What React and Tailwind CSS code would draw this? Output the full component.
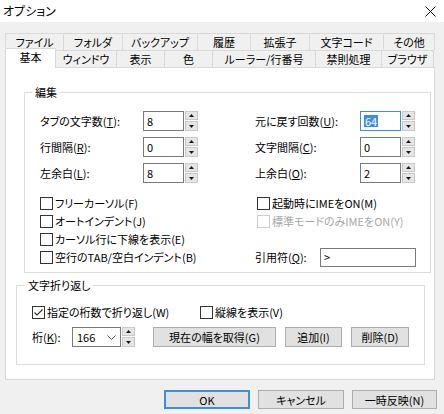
import React from 'react';

const row1 = [
  ['ファイル', 'w-[58px]'],
  ['フォルダ', 'w-[59px]'],
  ['バックアップ', 'w-[75px]'],
  ['履歴', 'w-[53px]'],
  ['拡張子', 'w-[59px]'],
  ['文字コード', 'w-[74px]'],
  ['その他', 'w-[52px]'],
];

const row2 = [
  ['ウィンドウ', 'w-[61px]'],
  ['表示', 'w-[48px]'],
  ['色', 'w-[48px]'],
  ['ルーラー/行番号', 'w-[103px]'],
  ['禁則処理', 'w-[66px]'],
  ['ブラウザ', 'w-[52px]'],
];

const U = ({ children }) => <span className="underline underline-offset-[1px]">{children}</span>;

function Spin() {
  return (
    <div className="ml-[1px] flex h-[20px] w-[13px] flex-col gap-[1px]">
      <div className="flex h-[9px] items-center justify-center border border-[#c8c8c8] bg-[#e5e5e5]">
        <svg width="5" height="3" viewBox="0 0 5 3"><path d="M0 3h5L2.5 0z" fill="#1a1a1a" /></svg>
      </div>
      <div className="flex h-[10px] items-center justify-center border border-[#c8c8c8] bg-[#e5e5e5]">
        <svg width="5" height="3" viewBox="0 0 5 3"><path d="M0 0h5L2.5 3z" fill="#1a1a1a" /></svg>
      </div>
    </div>
  );
}

function NumRow({ label, acc, value, labelW, selected }) {
  return (
    <div className="flex h-[20px] items-center">
      <span className={labelW}>
        {label}(<U>{acc}</U>):
      </span>
      <div
        className={
          'flex h-[20px] w-[41px] items-center bg-white pl-[3px] border ' +
          (selected ? 'border-[#3d8fdb]' : 'border-[#7a7a7a]')
        }
      >
        {selected ? <span className="bg-[#3d8fdb] px-[1px] text-white">{value}</span> : value}
      </div>
      <Spin />
    </div>
  );
}

function Check({ checked, disabled, children }) {
  return (
    <div className={'flex h-[18px] items-center gap-[2px] ' + (disabled ? 'text-[#a6a6a6]' : '')}>
      <span
        className={
          'flex h-[13px] w-[13px] shrink-0 items-center justify-center border bg-white ' +
          (disabled ? 'border-[#cccccc]' : 'border-[#333333]')
        }
      >
        {checked && (
          <svg width="11" height="11" viewBox="0 0 11 11">
            <path d="M1.5 5.5L4 8L9.5 2.5" fill="none" stroke="#333" strokeWidth="1.1" />
          </svg>
        )}
      </span>
      <span className="whitespace-nowrap">{children}</span>
    </div>
  );
}

function Btn({ w, children, primary }) {
  return (
    <div
      className={
        'flex items-center justify-center bg-[#e1e1e1] whitespace-nowrap ' +
        w +
        (primary ? ' border-2 border-[#3d8fdb]' : ' border border-[#adadad]')
      }
    >
      {children}
    </div>
  );
}

export default function App() {
  return (
    <div className="h-[414px] w-[444px] overflow-hidden bg-[#f0f0f0] font-['Noto_Sans_CJK_JP',sans-serif] text-[11px] leading-[12px] text-black [font-feature-settings:'palt']">
      {/* title bar */}
      <div className="flex h-[22px] items-center justify-between bg-white pl-[3px] pr-[8px]">
        <span className="text-[12px]">オプション</span>
        <svg width="11" height="11" viewBox="0 0 11 11">
          <path d="M0.5 0.5L10.5 10.5M10.5 0.5L0.5 10.5" stroke="#111" strokeWidth="1" />
        </svg>
      </div>

      <div className="px-[5px] pt-[11px]">
        {/* tabs */}
        <div className="flex h-[17px] w-[430px]">
          {row1.map(([t, w]) => (
            <div
              key={t}
              className={'flex h-full items-center justify-center border-t border-l border-[#d9d9d9] last:border-r ' + w}
            >
              {t}
            </div>
          ))}
        </div>
        <div className="flex h-[17px] w-[430px] items-start">
          <div className="relative z-10 -mt-[2px] flex h-[20px] w-[51px] items-center justify-center border-x border-t border-[#d9d9d9] bg-white pb-[3px]">
            基本
          </div>
          {row2.map(([t, w]) => (
            <div
              key={t}
              className={'flex h-full items-center justify-center border-t border-r border-[#d9d9d9] ' + w}
            >
              {t}
            </div>
          ))}
        </div>

        {/* panel */}
        <div className="h-[313px] w-[430px] border border-[#d9d9d9] bg-white">
          <fieldset className="mt-[18px] ml-[18px] w-[407px] border border-[#dcdcdc] pb-[6px]">
            <legend className="ml-[7px] px-[3px] leading-[12px]">編集</legend>
            <div className="pt-[13px] pl-[15px]">
              <div className="grid grid-cols-[215px_1fr] gap-y-[6px]">
                <NumRow label="タブの文字数" acc="T" value="8" labelW="w-[103px]" />
                <NumRow label="元に戻す回数" acc="U" value="64" labelW="w-[105px]" selected />
                <NumRow label="行間隔" acc="R" value="0" labelW="w-[103px]" />
                <NumRow label="文字間隔" acc="C" value="0" labelW="w-[105px]" />
                <NumRow label="左余白" acc="L" value="8" labelW="w-[103px]" />
                <NumRow label="上余白" acc="O" value="2" labelW="w-[105px]" />
              </div>
              <div className="mt-[11px] grid grid-cols-[215px_1fr]">
                <Check>フリーカーソル(F)</Check>
                <div className="pl-[2px]">
                  <Check>起動時にIMEをON(M)</Check>
                </div>
                <Check>オートインデント(J)</Check>
                <div className="pl-[2px]">
                  <Check disabled>標準モードのみIMEをON(Y)</Check>
                </div>
                <Check>カーソル行に下線を表示(E)</Check>
                <div className="h-[18px]" />
                <Check>空行のTAB/空白インデント(B)</Check>
                <div className="flex h-[18px] items-center">
                  <span className="w-[65px]">
                    引用符(<U>Q</U>):
                  </span>
                  <div className="flex h-[19px] w-[96px] items-center border border-[#7a7a7a] bg-white pl-[3px]">
                    &gt;
                  </div>
                </div>
              </div>
            </div>
          </fieldset>

          <fieldset className="mt-[6px] ml-[10px] w-[409px] border border-[#dcdcdc] pb-[17px]">
            <legend className="ml-[8px] px-[3px] leading-[12px]">文字折り返し</legend>
            <div className="pt-[12px] pl-[15px]">
              <div className="flex h-[18px]">
                <div className="w-[168px]">
                  <Check checked>指定の桁数で折り返し(W)</Check>
                </div>
                <Check>縦線を表示(V)</Check>
              </div>
              <div className="mt-[6px] flex h-[20px] items-center">
                <span className="w-[40px]">
                  桁(<U>K</U>):
                </span>
                <div className="flex h-[20px] w-[49px] items-center justify-between border border-[#7a7a7a] bg-white pr-[4px] pl-[4px]">
                  <span>166</span>
                  <svg width="9" height="5" viewBox="0 0 9 5">
                    <path d="M0.5 0.5L4.5 4.5L8.5 0.5" fill="none" stroke="#555" strokeWidth="1" />
                  </svg>
                </div>
                <Spin />
                <div className="ml-[18px] flex h-[20px]">
                  <Btn w="w-[123px]">現在の幅を取得(G)</Btn>
                </div>
                <div className="ml-[9px] flex h-[20px]">
                  <Btn w="w-[57px]">追加(I)</Btn>
                </div>
                <div className="ml-[9px] flex h-[20px]">
                  <Btn w="w-[58px]">削除(D)</Btn>
                </div>
              </div>
            </div>
          </fieldset>
        </div>

        {/* dialog buttons */}
        <div className="mt-[10px] mr-[2px] flex h-[19px] justify-end gap-[8px]">
          <Btn w="w-[86px]" primary>OK</Btn>
          <Btn w="w-[86px]">キャンセル</Btn>
          <Btn w="w-[85px]">一時反映(N)</Btn>
        </div>
      </div>
    </div>
  );
}
